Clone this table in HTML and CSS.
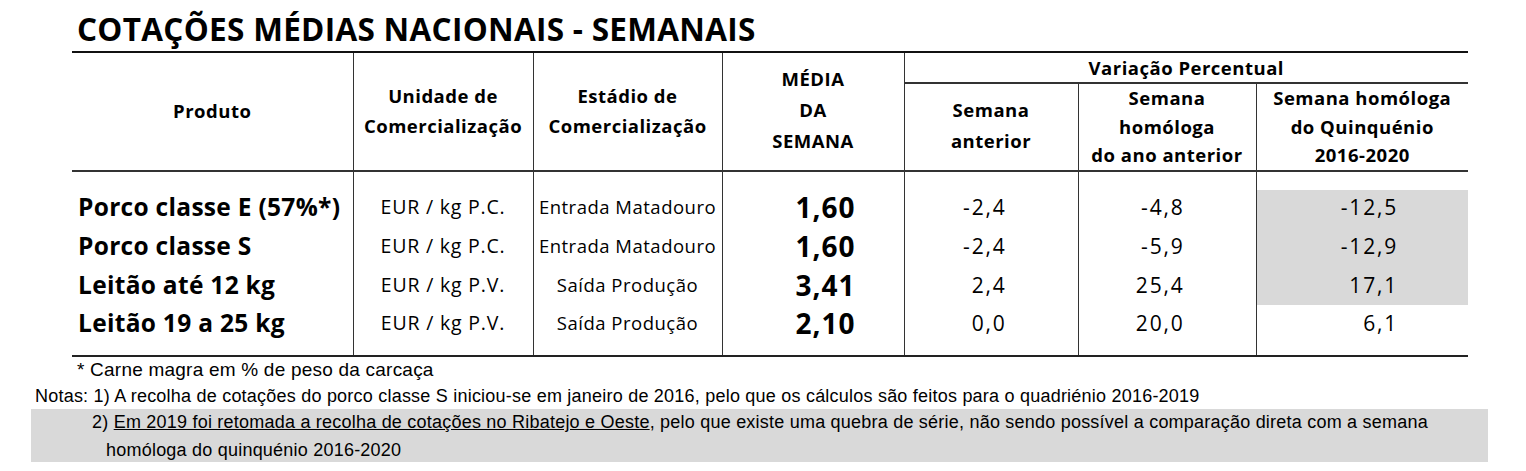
FILE: index.html
```html
<!DOCTYPE html>
<html lang="pt">
<head>
<meta charset="utf-8">
<link rel="stylesheet" href="styles.css">
</head>
<body>
<div class="page">
  <h1 class="title">COTAÇÕES MÉDIAS NACIONAIS - SEMANAIS</h1>
  <table class="quotes">
    <colgroup>
      <col class="c1"><col class="c2"><col class="c3"><col class="c4"><col class="c5"><col class="c6"><col class="c7">
    </colgroup>
    <thead>
      <tr class="h1">
        <th rowspan="2" class="vl">Produto</th>
        <th rowspan="2" class="vl">Unidade de<br>Comercialização</th>
        <th rowspan="2" class="vl">Estádio de<br>Comercialização</th>
        <th rowspan="2" class="vl media">MÉDIA<br>DA<br>SEMANA</th>
        <th colspan="3" class="var">Variação Percentual</th>
      </tr>
      <tr class="h2">
        <th class="vl sa">Semana<br>anterior</th>
        <th class="vl">Semana<br>homóloga<br>do ano anterior</th>
        <th>Semana homóloga<br>do Quinquénio<br>2016-2020</th>
      </tr>
    </thead>
    <tbody>
      <tr class="sp-top"><td class="vl"></td><td class="vl"></td><td class="vl"></td><td class="vl"></td><td class="vl"></td><td class="vl"></td><td></td></tr>
      <tr class="r">
        <td class="vl prod">Porco classe E (57%*)</td>
        <td class="vl unit">EUR / kg P.C.</td>
        <td class="vl stage">Entrada Matadouro</td>
        <td class="vl avg">1,60</td>
        <td class="vl num">-2,4</td>
        <td class="vl num">-4,8</td>
        <td class="num q shade">-12,5</td>
      </tr>
      <tr class="r">
        <td class="vl prod">Porco classe S</td>
        <td class="vl unit">EUR / kg P.C.</td>
        <td class="vl stage">Entrada Matadouro</td>
        <td class="vl avg">1,60</td>
        <td class="vl num">-2,4</td>
        <td class="vl num">-5,9</td>
        <td class="num q shade">-12,9</td>
      </tr>
      <tr class="r">
        <td class="vl prod">Leitão até 12 kg</td>
        <td class="vl unit">EUR / kg P.V.</td>
        <td class="vl stage">Saída Produção</td>
        <td class="vl avg">3,41</td>
        <td class="vl num">2,4</td>
        <td class="vl num">25,4</td>
        <td class="num q shade">17,1</td>
      </tr>
      <tr class="r">
        <td class="vl prod">Leitão 19 a 25 kg</td>
        <td class="vl unit">EUR / kg P.V.</td>
        <td class="vl stage">Saída Produção</td>
        <td class="vl avg">2,10</td>
        <td class="vl num">0,0</td>
        <td class="vl num">20,0</td>
        <td class="num q">6,1</td>
      </tr>
      <tr class="sp-bot"><td class="vl"></td><td class="vl"></td><td class="vl"></td><td class="vl"></td><td class="vl"></td><td class="vl"></td><td></td></tr>
    </tbody>
  </table>
  <div class="notes">
    <p class="foot">* Carne magra em % de peso da carcaça</p>
    <p class="n1">Notas: 1) A recolha de cotações do porco classe S iniciou-se em janeiro de 2016, pelo que os cálculos são feitos para o quadriénio 2016-2019</p>
    <div class="n2">
      <p class="n2a">2) <u>Em 2019 foi retomada a recolha de cotações no Ribatejo e Oeste</u>, pelo que existe uma quebra de série, não sendo possível a comparação direta com a semana</p>
      <p class="n2b">homóloga do quinquénio 2016-2020</p>
    </div>
  </div>
</div>
</body>
</html>
```

FILE: styles.css
```css
html, body {
  margin: 0;
  padding: 0;
  background: #fff;
  color: #000;
}
body {
  font-family: "Open Sans", "Noto Sans", sans-serif;
}
.page {
  padding-top: 6px;
}
.title {
  margin: 0 0 0 77px;
  font-size: 31.5px;
  font-weight: 700;
  line-height: 45px;
  height: 45px;
  letter-spacing: 0.3px;
  white-space: nowrap;
}
.quotes {
  margin-left: 72px;
  width: 1396px;
  border-collapse: collapse;
  table-layout: fixed;
  border-top: 2px solid #111;
  border-bottom: 2px solid #222;
}
.c1 { width: 281px; }
.c2 { width: 180px; }
.c3 { width: 189px; }
.c4 { width: 182px; }
.c5 { width: 174px; }
.c6 { width: 178px; }
.c7 { width: 212px; }
th, td {
  padding: 0;
}
.vl {
  border-right: 1px solid #333;
}
th {
  font-weight: 700;
  font-size: 18.5px;
  letter-spacing: 0.5px;
  line-height: 30px;
  text-align: center;
  vertical-align: middle;
  white-space: nowrap;
}
thead {
  border-bottom: 2px solid #333;
}
.h1 { height: 31px; }
.h2 { height: 85px; }
.var {
  border-bottom: 2px solid #333;
  line-height: 28px;
  vertical-align: middle;
}
.media { line-height: 31px; padding-top: 0; padding-bottom: 3px; }
.h2 th { line-height: 28.5px; }
.h2 .sa { line-height: 31px; padding-bottom: 3px; }
.sp-top { height: 19px; }
.sp-bot { height: 12px; }
.r { height: 38.67px; }
td {
  vertical-align: middle;
  white-space: nowrap;
}
.r td {
  height: 38.67px;
  line-height: 30px;
  padding-bottom: 3px;
  box-sizing: border-box;
}
.prod {
  font-weight: 700;
  font-size: 24.5px;
  letter-spacing: 0.3px;
  padding-left: 6px;
  text-align: left;
}
.unit {
  font-size: 19.5px;
  letter-spacing: 0.8px;
  text-align: center;
}
.stage {
  font-size: 18.5px;
  letter-spacing: 0.5px;
  text-align: center;
}
.r .avg {
  font-weight: 700;
  font-size: 28px;
  letter-spacing: 1px;
  text-align: right;
  padding-right: 48px;
}
.r .num {
  font-size: 21px;
  letter-spacing: 1.8px;
  text-align: right;
  padding-right: 71px;
}
.r .q { padding-right: 70px; }
.shade { background: #d9d9d9; }
.notes {
  font-family: "Liberation Sans", Arial, sans-serif;
  font-size: 18px;
  letter-spacing: 0.22px;
  line-height: 26px;
  white-space: nowrap;
}
.notes p { margin: 0; }
.foot {
  padding-left: 77px;
  font-size: 19px;
  height: 25px;
  line-height: 25px;
}
.n1 {
  padding-left: 35px;
  height: 27px;
  line-height: 29px;
}
.n2 {
  margin-left: 31px;
  width: 1457px;
  background: #d9d9d9;
  height: 53px;
}
.n2a { padding-left: 61px; line-height: 27px; }
.n2b { padding-left: 75px; line-height: 28px; }
```
